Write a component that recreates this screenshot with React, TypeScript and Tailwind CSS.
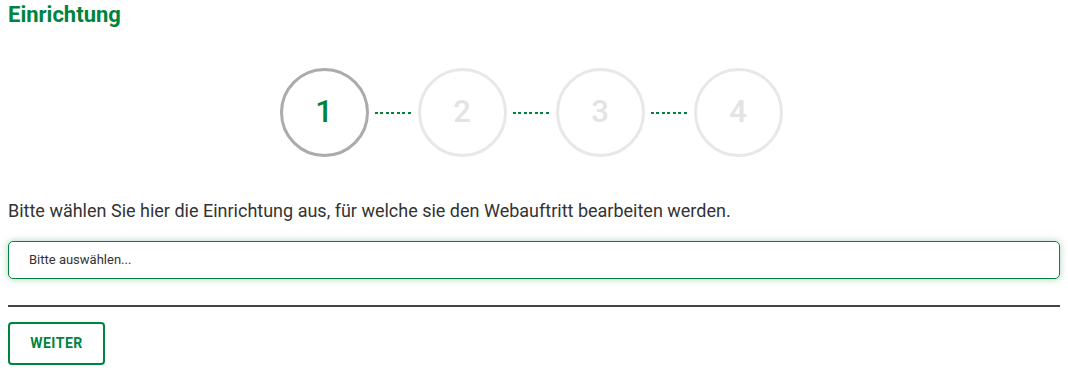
import { Fragment } from "react"

const steps = [1, 2, 3, 4]

function Step({ n, active }: { n: number; active: boolean }) {
  return (
    <div
      className={
        "flex h-[89px] w-[89px] items-center justify-center rounded-full border-[3px] text-[31px] font-medium " +
        (active ? "border-[#ababab] text-[#00843d]" : "border-[#e8e8e8] text-[#e3e3e3]")
      }
    >
      {n}
    </div>
  )
}

export default function App() {
  return (
    <div className="px-2 font-['Roboto',sans-serif] text-[#333]">
      <h1 className="pt-[3px] text-[22px] font-bold leading-6 text-[#00843d]">Einrichtung</h1>

      <div className="mt-[41px] flex items-center justify-center pr-[6px]">
        {steps.map((n, i) => (
          <Fragment key={n}>
            {i > 0 && (
              <div className="mx-[6px] h-[2px] w-[37px] bg-[repeating-linear-gradient(90deg,#00843d_0_3px,transparent_3px_5.5px)]" />
            )}
            <Step n={n} active={i === 0} />
          </Fragment>
        ))}
      </div>

      <p className="mt-[42px] text-[18px] leading-6">
        Bitte wählen Sie hier die Einrichtung aus, für welche sie den Webauftritt bearbeiten werden.
      </p>

      <div className="mt-[18px] flex h-[38px] items-center rounded-[5px] border border-[#00843d] pl-5 text-[13px] text-[#333] shadow-[0_0_7px_rgba(0,132,61,0.35)]">
        Bitte auswählen...
      </div>

      <hr className="mt-[26px] border-t-2 border-[#444]" />

      <button className="mt-[15px] h-[43px] w-[97px] rounded-[4px] border-2 border-[#00843d] text-[14px] font-bold tracking-[0.5px] text-[#00843d]">
        WEITER
      </button>
    </div>
  )
}
